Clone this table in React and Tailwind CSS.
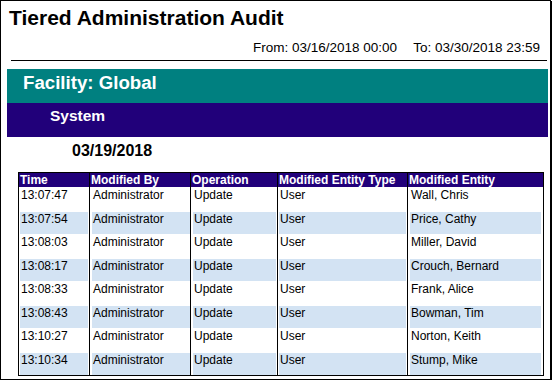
import React from 'react';

const rows = [
    { time: '13:07:47', by: 'Administrator', op: 'Update', type: 'User', entity: 'Wall, Chris' },
    { time: '13:07:54', by: 'Administrator', op: 'Update', type: 'User', entity: 'Price, Cathy' },
    { time: '13:08:03', by: 'Administrator', op: 'Update', type: 'User', entity: 'Miller, David' },
    { time: '13:08:17', by: 'Administrator', op: 'Update', type: 'User', entity: 'Crouch, Bernard' },
    { time: '13:08:33', by: 'Administrator', op: 'Update', type: 'User', entity: 'Frank, Alice' },
    { time: '13:08:43', by: 'Administrator', op: 'Update', type: 'User', entity: 'Bowman, Tim' },
    { time: '13:10:27', by: 'Administrator', op: 'Update', type: 'User', entity: 'Norton, Keith' },
    { time: '13:10:34', by: 'Administrator', op: 'Update', type: 'User', entity: 'Stump, Mike' },
];

// column widths between the black rules, left to right
const cols = [
    { key: 'time', label: 'Time', w: 'w-[70px]', inset: 'ml-[1px] mr-[1px]' },
    { key: 'by', label: 'Modified By', w: 'w-[101px] border-l border-black', inset: 'ml-[2px] mr-[0px]' },
    { key: 'op', label: 'Operation', w: 'w-[87px] border-l border-black', inset: 'ml-[2px] mr-[1px]' },
    { key: 'type', label: 'Modified Entity Type', w: 'w-[130px] border-l border-black', inset: 'ml-[1px] mr-[1px]' },
    { key: 'entity', label: 'Modified Entity', w: 'w-[135px] border-l border-black', inset: 'ml-[2px] mr-[1px]' },
];

const heights = ['h-[24px]', 'h-[23px]', 'h-[24px]', 'h-[23px]', 'h-[24px]', 'h-[23px]', 'h-[24px]', 'h-[23px]'];

export default function App() {
    return (
        <div className="w-[551px] h-[380px] border border-black shadow-[1px_1px_0_#000] bg-white text-black font-['Liberation_Sans',Arial,sans-serif]">
            <div className="mt-[6px] pl-[8px] text-[21px] leading-[21px] font-bold">Tiered Administration Audit</div>

            <div className="mt-[13px] pr-[10px] flex justify-end gap-[16px] text-[13.5px] leading-[13px]">
                <span>From: 03/16/2018 00:00</span>
                <span>To: 03/30/2018 23:59</span>
            </div>

            <div className="mt-[6px] ml-[10px] mr-[3px] h-px bg-black"></div>

            <div className="mt-[8px] ml-[6px] mr-[2px] h-[34px] bg-[#008080] pl-[16px] pt-[4px] text-white font-bold text-[18.67px] leading-[19px]">
                Facility: Global
            </div>
            <div className="ml-[6px] mr-[2px] h-[34px] bg-[#21007a] pl-[43px] pt-[5px] text-white font-bold text-[15.5px] leading-[16px]">
                System
            </div>

            <div className="mt-[6px] pl-[71px] text-[16px] leading-[16px] font-bold">03/19/2018</div>

            {/* audit table */}
            <div className="mt-[13px] ml-[17px] w-[526px] border border-black text-[12px] leading-[14px]">
                <div className="flex h-[14px] bg-[#21007a] text-white font-bold">
                    {cols.map(c => (
                        <div key={c.key} className={`${c.w} pl-[1px] whitespace-nowrap`}>{c.label}</div>
                    ))}
                </div>
                {rows.map((r, i) => (
                    <div key={r.time} className={`flex ${heights[i]}`}>
                        {cols.map(c => (
                            <div key={c.key} className={`${c.w} flex`}>
                                <div className={`flex-1 ${c.inset} mt-[1px] pl-[1px] whitespace-nowrap ${i % 2 === 1 ? 'bg-[#d3e3f3]' : ''}`}>
                                    {r[c.key]}
                                </div>
                            </div>
                        ))}
                    </div>
                ))}
            </div>
        </div>
    );
}
